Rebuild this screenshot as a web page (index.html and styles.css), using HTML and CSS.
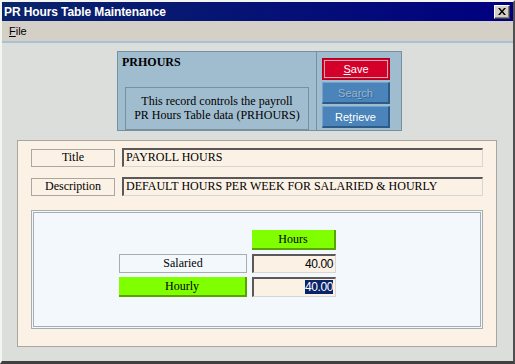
FILE: index.html
```html
<!DOCTYPE html>
<html lang="en">
<head>
    <meta charset="UTF-8">
    <title>PR Hours Table Maintenance</title>
    <link rel="stylesheet" href="styles.css">
</head>
<body>
    <div class="window">
        <div class="titlebar">
            <span class="title">PR Hours Table Maintenance</span>
            <div class="close-btn">
                <svg width="8" height="7" viewBox="0 0 8 7">
                    <path d="M0 0h2l2 2.5L6 0h2L5 3.5 8 7H6L4 4.5 2 7H0l3-3.5z" fill="#000"/>
                </svg>
            </div>
        </div>
        <div class="menubar"><span class="menu-item"><u>F</u>ile</span></div>
        <div class="menu-line"></div>

        <div class="content">
            <!-- cabecalho do registro -->
            <div class="record-header">
                <div class="record-info">
                    <div class="record-code">PRHOURS</div>
                    <div class="record-desc">This record controls the payroll<br>PR Hours Table data (PRHOURS)</div>
                </div>
                <div class="record-actions">
                    <div class="btn btn-save"><u>S</u>ave</div>
                    <div class="btn btn-blue disabled">Sea<u>r</u>ch</div>
                    <div class="btn btn-blue">Re<u>t</u>rieve</div>
                </div>
            </div>

            <div class="main-panel">
                <div class="form-row">
                    <div class="label-box">Title</div>
                    <div class="text-field">PAYROLL HOURS</div>
                </div>
                <div class="form-row">
                    <div class="label-box">Description</div>
                    <div class="text-field">DEFAULT HOURS PER WEEK FOR SALARIED &amp; HOURLY</div>
                </div>

                <div class="hours-panel">
                    <div class="hours-grid">
                        <div></div>
                        <div class="green-cell">Hours</div>
                        <div class="row-label">Salaried</div>
                        <div class="num-field">40.00</div>
                        <div class="green-cell">Hourly</div>
                        <div class="num-field"><span class="selected">40.00</span></div>
                    </div>
                </div>
            </div>
        </div>
    </div>
</body>
</html>
```

FILE: styles.css
```css
body {
    margin: 0;
    background-color: #dcdedb;
}
.window {
    width: 515px;
    height: 364px;
    box-sizing: border-box;
    border-style: solid;
    border-width: 2px 2px 3px 2px;
    border-color: #f4f4f0 #505050 #404040 #f4f4f0;
    background-color: #dcdedb;
    display: flex;
    flex-direction: column;
    overflow: hidden;
}
.titlebar {
    height: 19px;
    background: linear-gradient(to right, #0a246a, #000080);
    display: flex;
    align-items: center;
    justify-content: space-between;
    padding: 0 3px 0 2px;
}
.title {
    color: #fff;
    font-family: "Liberation Sans", Arial, sans-serif;
    font-weight: 700;
    font-size: 12px;
    letter-spacing: -0.1px;
}
.close-btn {
    width: 16px;
    height: 14px;
    box-sizing: border-box;
    background-color: #d4d0c8;
    border-style: solid;
    border-width: 1px;
    border-color: #fff #404040 #404040 #fff;
    box-shadow: inset -1px -1px 0 #808080;
    display: flex;
    align-items: center;
    justify-content: center;
}
.menubar {
    height: 20px;
    background-color: #d4d0c8;
    display: flex;
    align-items: center;
}
.menu-item {
    margin-left: 7px;
    font-family: "Liberation Sans", Arial, sans-serif;
    font-size: 11px;
    color: #000;
}
.menu-line {
    height: 2px;
    background-color: #a6c2d6;
}
.content {
    flex: 1;
    padding-top: 8px;
}

/* cabecalho */
.record-header {
    margin-left: 115px;
    width: 285px;
    height: 80px;
    box-sizing: border-box;
    border: 1px solid #76909f;
    background-color: #a0bdcf;
    display: flex;
}
.record-info {
    width: 199px;
    border-right: 1px solid #76909f;
    padding: 3px 0 0 4px;
    box-sizing: border-box;
}
.record-code {
    font-family: "Liberation Serif", "Times New Roman", serif;
    font-weight: 700;
    font-size: 12px;
}
.record-desc {
    margin: 17px 0 0 3px;
    width: 184px;
    height: 43px;
    box-sizing: border-box;
    border: 1px solid #76909f;
    font-family: "Liberation Serif", "Times New Roman", serif;
    font-size: 12px;
    line-height: 14px;
    text-align: center;
    padding-top: 6px;
}
.record-actions {
    padding: 6px 0 0 5px;
    display: flex;
    flex-direction: column;
    gap: 2px;
}
.btn {
    width: 68px;
    height: 22px;
    box-sizing: border-box;
    display: flex;
    align-items: center;
    justify-content: center;
    font-family: "Liberation Sans", Arial, sans-serif;
    font-size: 11px;
    color: #fff;
}
.btn-save {
    background-color: #d4002a;
    border: 1px solid #b0001e;
    box-shadow: inset 0 0 0 1px #d4002a, inset 0 0 0 2px #dba8b2;
}
.btn-blue {
    background-color: #4a84ba;
    border-style: solid;
    border-width: 1px 2px 2px 1px;
    border-color: #70a2d0 #2c5b88 #2c5b88 #70a2d0;
}
.btn-blue.disabled {
    color: #9cb4ca;
    text-shadow: 1px 1px 0 #356798;
}

/* painel principal */
.main-panel {
    margin: 9px 0 0 15px;
    width: 480px;
    height: 207px;
    box-sizing: border-box;
    border: 1px solid #a9a6a0;
    background-color: #fbf1e5;
    padding: 7px 0 0 13px;
}
.form-row {
    display: flex;
    align-items: center;
    gap: 7px;
    margin-bottom: 10px;
}
.label-box {
    width: 84px;
    height: 18px;
    box-sizing: border-box;
    border: 1px solid #aaa7a2;
    font-family: "Liberation Serif", "Times New Roman", serif;
    font-size: 12px;
    display: flex;
    align-items: center;
    justify-content: center;
}
.text-field {
    width: 361px;
    height: 19px;
    box-sizing: border-box;
    border-style: solid;
    border-width: 2px 1px 1px 2px;
    border-color: #5a5858 #d8d6d2 #d8d6d2 #5a5858;
    background-color: #fbf1e5;
    font-family: "Liberation Serif", "Times New Roman", serif;
    font-size: 12px;
    padding-left: 2px;
    line-height: 15px;
}
.hours-panel {
    margin-top: 14px;
    width: 452px;
    height: 119px;
    box-sizing: border-box;
    border: 3px double #a9adb2;
    background-color: #f3f8fc;
    padding: 17px 0 0 85px;
}
.hours-grid {
    display: grid;
    grid-template-columns: 128px 84px;
    grid-template-rows: 20px 19px 20px;
    column-gap: 5px;
    row-gap: 4px;
}
.green-cell {
    background-color: #80ff00;
    border-right: 2px solid #5aa400;
    border-bottom: 2px solid #5aa400;
    box-sizing: border-box;
    font-family: "Liberation Serif", "Times New Roman", serif;
    font-size: 12px;
    display: flex;
    align-items: center;
    justify-content: center;
}
.row-label {
    border: 1px solid #a9adb2;
    box-sizing: border-box;
    font-family: "Liberation Serif", "Times New Roman", serif;
    font-size: 12px;
    display: flex;
    align-items: center;
    justify-content: center;
}
.num-field {
    border-style: solid;
    border-width: 2px 1px 1px 2px;
    border-color: #5a5858 #d8d6d2 #d8d6d2 #5a5858;
    background-color: #fbf1e5;
    box-sizing: border-box;
    font-family: "Liberation Sans", Arial, sans-serif;
    font-size: 12px;
    letter-spacing: -0.4px;
    text-align: right;
    padding-right: 2px;
    line-height: 16px;
}
.selected {
    background-color: #0a246a;
    color: #fff;
}
```
